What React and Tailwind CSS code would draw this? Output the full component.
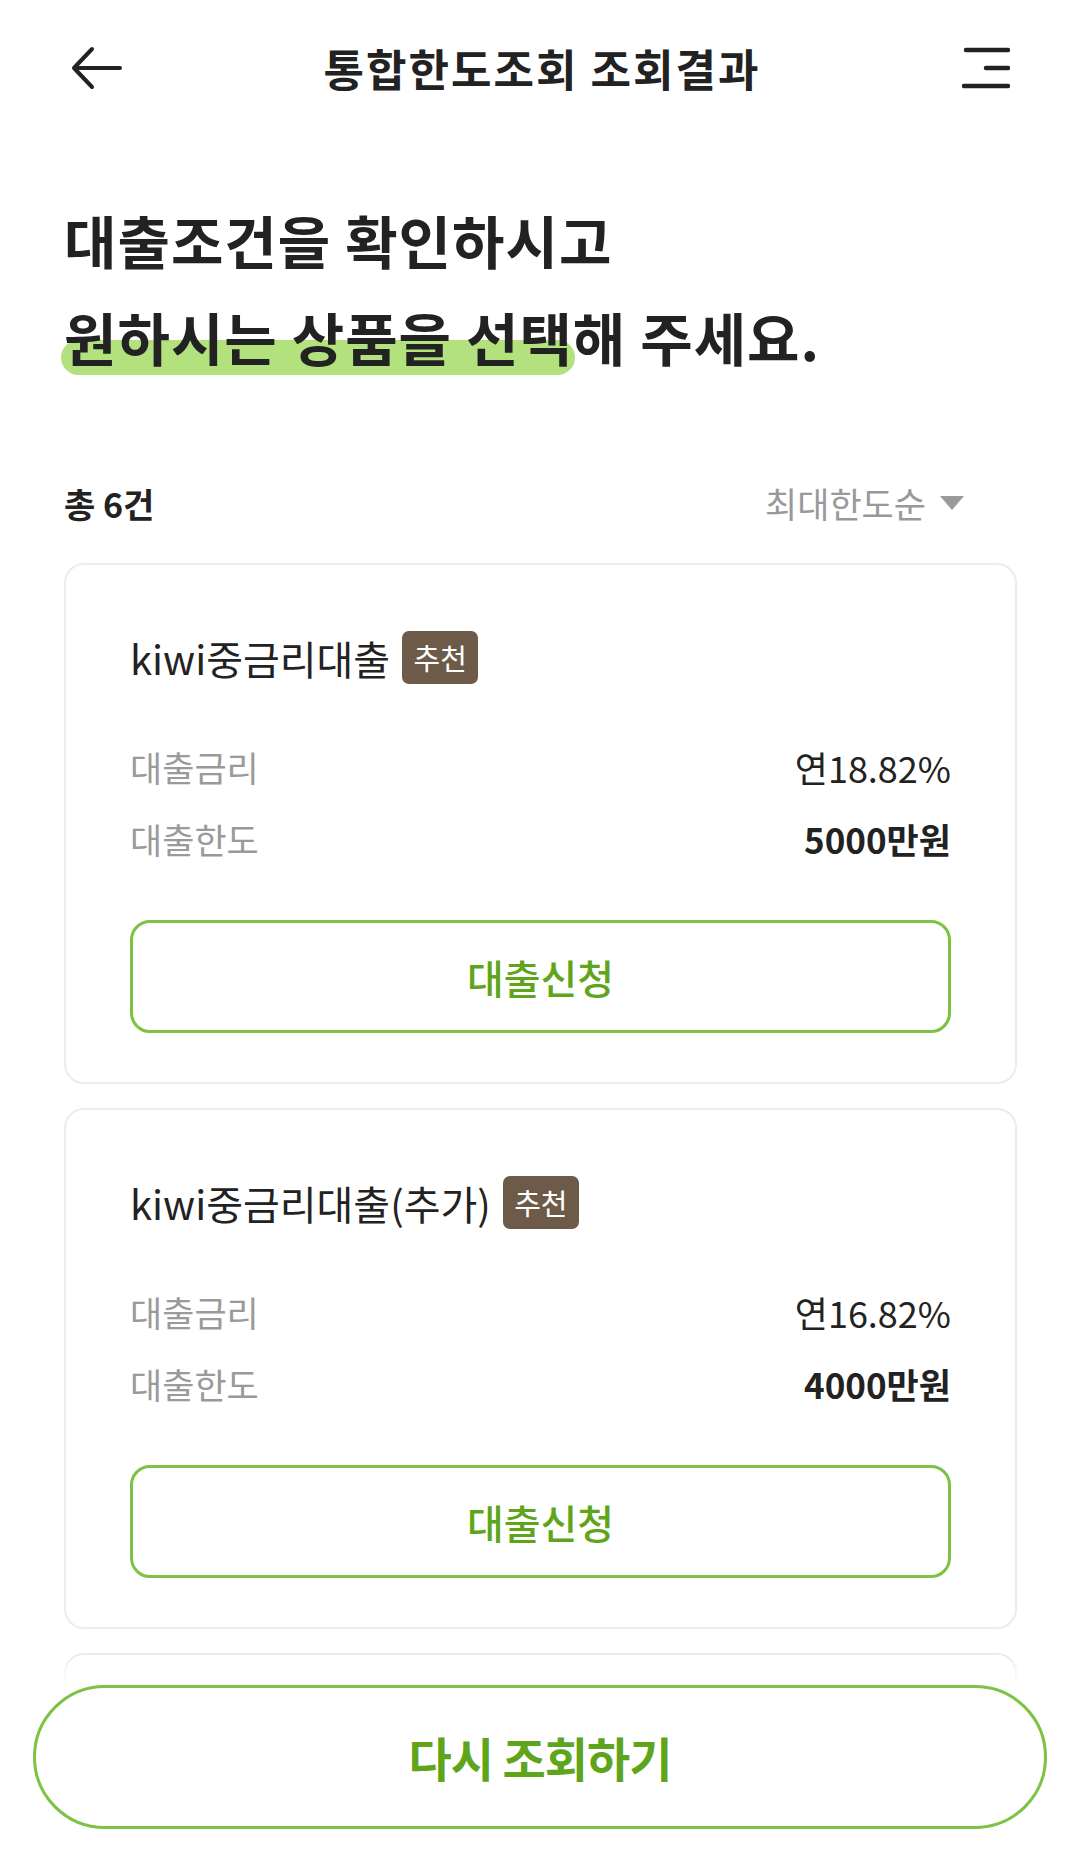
import React from "react";

const products = [
  { id: "p1", name: "kiwi중금리대출", rate: "연18.82%", limit: "5000만원" },
  { id: "p2", name: "kiwi중금리대출(추가)", rate: "연16.82%", limit: "4000만원" },
  { id: "p3", name: "kiwi생활비대출", rate: "연15.90%", limit: "3000만원" },
  { id: "p4", name: "kiwi비상금대출", rate: "연14.50%", limit: "2000만원" },
  { id: "p5", name: "kiwi소액대출", rate: "연13.20%", limit: "1000만원" },
  { id: "p6", name: "kiwi간편대출", rate: "연12.80%", limit: "500만원" },
];

const BackIcon = () => (
  <svg width="52" height="44" viewBox="0 0 52 44" fill="none">
    <path d="M50 22H4M22 3L4 22l18 19" stroke="#222" strokeWidth="4" strokeLinecap="round" strokeLinejoin="round" />
  </svg>
);

const MenuIcon = () => (
  <svg width="48" height="44" viewBox="0 0 48 44" fill="none">
    <path d="M4 4H46M24 22H46M2 40H46" stroke="#222" strokeWidth="4.5" strokeLinecap="round" />
  </svg>
);

const ProductCard = ({ p }) => (
  <div className="rounded-[20px] border-2 border-[#ececec] bg-white px-[64px] pt-[66px] pb-[49px]">
    <div className="flex h-[53px] items-center">
      <span className="text-[40px] leading-none text-[#222] font-normal">{p.name}</span>
      <span className="ml-[12px] flex h-[53px] w-[76px] items-center justify-center rounded-[7px] bg-[#6e5a48] text-[29px] text-white leading-none">추천</span>
    </div>
    <div className="mt-[47px]">
      <div className="flex h-[72px] items-center justify-between">
        <span className="text-[35px] text-[#9a9a9a]">대출금리</span>
        <span className="text-[36px] text-[#222]">{p.rate}</span>
      </div>
      <div className="flex h-[72px] items-center justify-between">
        <span className="text-[35px] text-[#9a9a9a]">대출한도</span>
        <span className="text-[35px] font-bold text-[#222]">{p.limit}</span>
      </div>
    </div>
    <button className="mt-[45px] flex h-[113px] w-full items-center justify-center rounded-[20px] border-[3px] border-[#7dc242] bg-white text-[40px] font-medium text-[#5fa51c]">
      대출신청
    </button>
  </div>
);

export default function App() {
  return (
    <div
      className="flex h-screen flex-col overflow-hidden bg-white text-[#222]"
      style={{ fontFamily: '"Noto Sans CJK KR", "Noto Sans", sans-serif' }}
    >
      {/* header */}
      <div className="flex h-[136px] shrink-0 items-center justify-between px-[70px]">
        <BackIcon />
        <h1 className="text-[44px] font-bold tracking-[2px]">통합한도조회 조회결과</h1>
        <MenuIcon />
      </div>

      <div className="relative flex-1 overflow-hidden">
        <div className="h-full overflow-y-auto">
          <div className="px-[64px] pt-[55px]">
            <h2 className="text-[57px] font-bold leading-[97px] tracking-[1px]">
              대출조건을 확인하시고
              <br />
              <span className="relative">
                <span className="absolute left-[-3px] right-[-2px] bottom-[2px] h-[35px] rounded-full bg-[#b2e17e]"></span>
                <span className="relative">원하시는 상품을 선택</span>
              </span>
              해 주세요.
            </h2>
          </div>

          <div className="mt-[88px] mb-[30px] flex h-[60px] items-center justify-between pl-[64px] pr-[116px]">
            <span className="text-[34px] font-bold">총 6건</span>
            <button className="flex items-center gap-[14px] text-[35px] text-[#999]">
              최대한도순
              <svg width="24" height="14" viewBox="0 0 24 14">
                <path d="M0 0H24L12 14Z" fill="#999" />
              </svg>
            </button>
          </div>

          <div className="flex flex-col gap-[24px] pl-[64px] pr-[63px] pb-[40px]">
            {products.map((p) => (
              <ProductCard key={p.id} p={p} />
            ))}
          </div>
        </div>
        <div className="pointer-events-none absolute bottom-0 left-0 right-0 h-[30px] bg-gradient-to-b from-transparent to-white"></div>
      </div>

      {/* bottom */}
      <div className="shrink-0 bg-white px-[33px] pb-[32px]">
        <button className="flex h-[144px] w-full items-center justify-center rounded-full border-[3px] border-[#7dc242] bg-white text-[47px] font-bold text-[#5fa51c] tracking-[-1px]">
          다시 조회하기
        </button>
      </div>
    </div>
  );
}
